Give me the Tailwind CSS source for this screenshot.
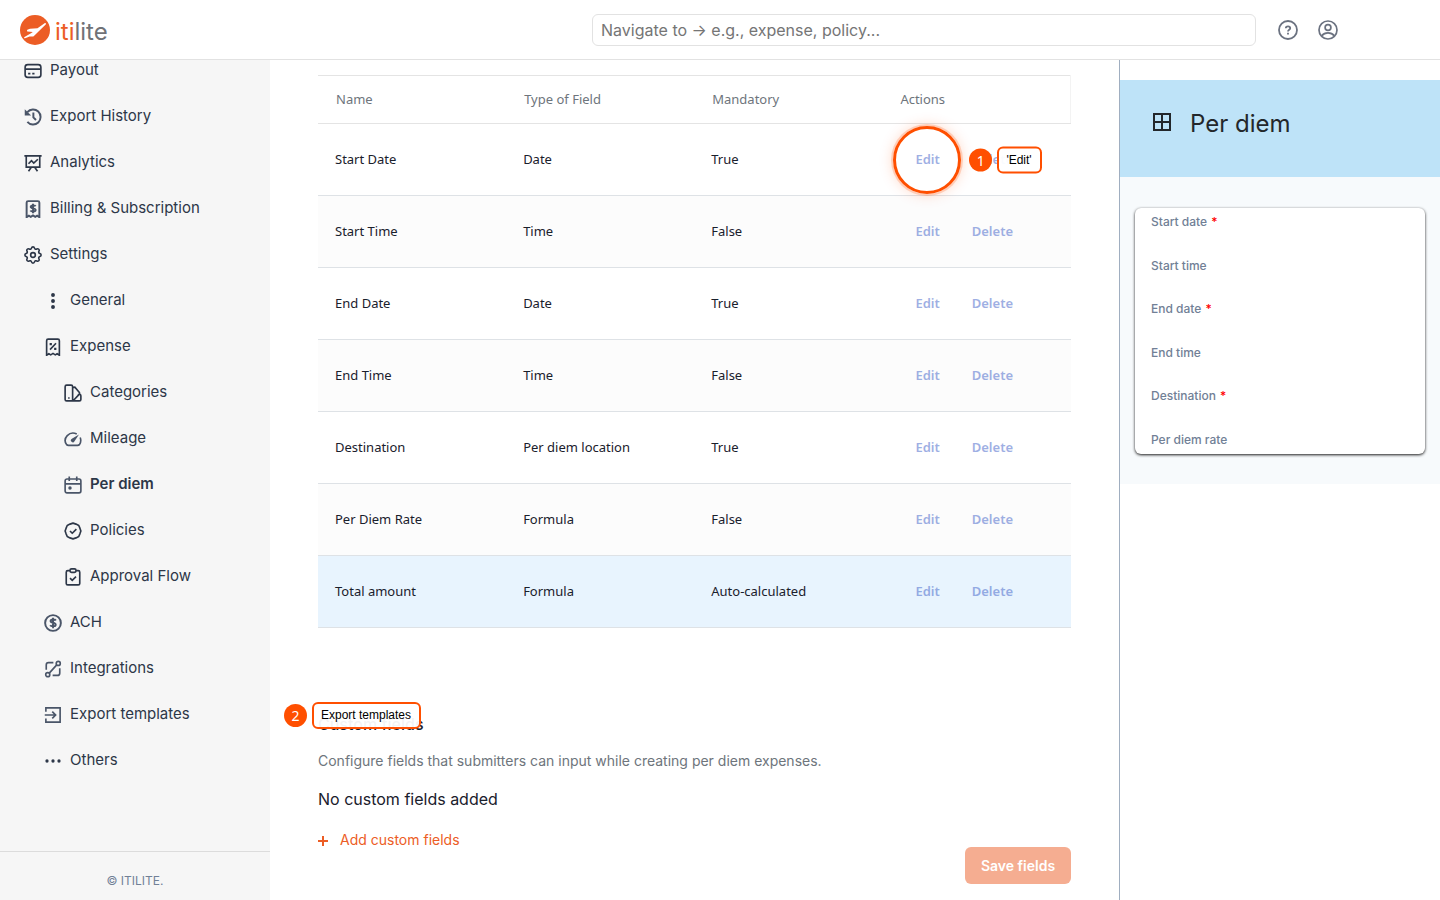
<!DOCTYPE html>
<html lang="en">
<head>
    <meta charset="UTF-8">
    <meta name="viewport" content="width=device-width, initial-scale=1.0">
    <title>ITILITE - Per diem</title>
    <script src="https://cdn.jsdelivr.net/npm/@tailwindcss/browser@4"></script>
</head>
<body class="bg-white text-[#1a202c] font-['Inter',sans-serif] h-screen flex flex-col overflow-hidden">
<header class="h-[60px] shrink-0 flex items-center border-b border-[#e2e2e2] pl-5 pr-[102px]">
    <a href="#" class="flex items-center gap-[5px] w-[572px] shrink-0">
        <svg class="size-[30px]" viewBox="0 0 30 30">
            <circle cx="15" cy="15" r="15" fill="#ec5d25"/>
            <path d="M24.600 8.200c1-.6 1.900.4 1.100 1.200L17.500 17.500l-3.800 3.700c-1.200.9-3.200-.2-4.700.5l-4 1.600c-1 .1-1.200-.8-.5-1.300l6.500-3.800 1.800-1.200-5.300-.4c-1-.6-.5-2 .5-2.200l2-.6 7.500-.6z" fill="#fff"/>
        </svg>
        <span class="text-2xl leading-[30px] pt-[5px] text-[#707277]"><span class="text-[#ec5d25]">iti</span>lite</span>
    </a>
    <input type="text" aria-label="Navigate" placeholder="Navigate to → e.g., expense, policy..." class="flex-1 h-8 border border-[#e2e2e2] rounded-md px-2 text-base placeholder:text-[#757575]">
    <button aria-label="Help" class="ml-[22px] text-[#6b7280]">
        <svg class="size-5" viewBox="0 0 20 20" fill="none" stroke="currentColor" stroke-width="1.800">
            <circle cx="10" cy="10" r="9"/>
            <path d="M7.800 8.300c0-1.300 1-2 2.200-2s2.200.8 2.200 1.900c0 1.500-2.200 1.500-2.200 3.200M10 12.700v1.700"/>
        </svg>
    </button>
    <button aria-label="Account" class="ml-5 text-[#6b7280]">
        <svg class="size-5" viewBox="0 0 20 20" fill="none" stroke="currentColor" stroke-width="1.700">
            <circle cx="10" cy="10" r="9"/>
            <circle cx="10" cy="7.500" r="2.900"/>
            <path d="M3.800 15.700c1.500-2 3.700-2.900 6.200-2.900s4.700.9 6.200 2.900"/>
        </svg>
    </button>
</header>
<div class="flex-1 min-h-0 flex">
    <aside class="w-[270px] shrink-0 bg-[#f6f6f6] flex flex-col text-[15px] text-[#2d3748]">
        <nav class="flex-1 min-h-0 overflow-hidden">
            <!-- list is scrolled a little under the header -->
            <ul class="-mt-[13px]">
                <li><a href="#" class="flex items-center gap-2 h-[46px] pl-6">
                    <svg class="size-[18px] mt-[2px]" viewBox="0 0 24 24" fill="none" stroke="currentColor" stroke-width="2.200"><rect x="1.500" y="3.500" width="21" height="17" rx="3.500"/><path d="M2 9.500h20M5.500 15.500h3M11 15.500h3"/></svg>
                    Payout</a></li>
                <li><a href="#" class="flex items-center gap-2 h-[46px] pl-6">
                    <svg class="size-[18px] mt-[2px] text-[#4a5568]" viewBox="0 0 24 24" fill="none" stroke="currentColor" stroke-width="2.600"><path d="M4.500 18.500A10 10 0 1 0 4.500 5.500"/><path d="M1 1.500v8.500h8.500z" fill="currentColor" stroke="none"/><path d="M12.500 6v6.500l3.500 3.500"/></svg>
                    Export History</a></li>
                <li><a href="#" class="flex items-center gap-2 h-[46px] pl-6">
                    <svg class="size-[18px] mt-[2px]" viewBox="0 0 24 24" fill="none" stroke="currentColor" stroke-width="2.200"><path d="M.5 2.500h23M3 2.500v15h18v-15M6 13l4-4 3 3 5.500-5M9.500 18L6 23M14.500 18l3.500 5"/></svg>
                    Analytics</a></li>
                <li><a href="#" class="flex items-center gap-2 h-[46px] pl-6">
                    <svg class="size-[18px] mt-[2px] text-[#4a5568]" viewBox="0 0 24 24" fill="none" stroke="currentColor" stroke-width="2.600"><path d="M3.500 23V3.500C3.500 2 4 1.500 5.500 1.500h13c1.500 0 2 .5 2 2V23l-3-2-2.500 1.500-3-2-3 2L6.500 21z"/><path d="M15.500 8.300c-1-1.500-6.500-1.800-6.500.8 0 3 6.500 1.200 6.500 4.200 0 2.700-5.700 2.400-7 .7M12 5v12.500"/></svg>
                    Billing &amp; Subscription</a></li>
                <li><a href="#" class="flex items-center gap-2 h-[46px] pl-6">
                    <svg class="size-[18px] mt-[2px]" viewBox="2 2 20 20" fill="none" stroke="currentColor" stroke-width="1.800"><path d="M10.325 4.317c.426-1.756 2.924-1.756 3.350 0a1.724 1.724 0 0 0 2.573 1.066c1.543-.94 3.310.826 2.370 2.370a1.724 1.724 0 0 0 1.065 2.572c1.756.426 1.756 2.924 0 3.350a1.724 1.724 0 0 0-1.066 2.573c.94 1.543-.826 3.310-2.370 2.370a1.724 1.724 0 0 0-2.572 1.065c-.426 1.756-2.924 1.756-3.350 0a1.724 1.724 0 0 0-2.573-1.066c-1.543.94-3.310-.826-2.370-2.370a1.724 1.724 0 0 0-1.065-2.572c-1.756-.426-1.756-2.924 0-3.350a1.724 1.724 0 0 0 1.066-2.573c-.94-1.543.826-3.310 2.370-2.370 1 .608 2.296.07 2.572-1.065z"/><circle cx="12" cy="12" r="2.600"/></svg>
                    Settings</a></li>
                <li><a href="#" class="flex items-center gap-2 h-[46px] pl-11">
                    <svg class="size-[18px] mt-[2px]" viewBox="0 0 24 24" fill="currentColor"><circle cx="12" cy="4" r="2.600"/><circle cx="12" cy="12" r="2.600"/><circle cx="12" cy="20" r="2.600"/></svg>
                    General</a></li>
                <li><a href="#" class="flex items-center gap-2 h-[46px] pl-11">
                    <svg class="size-[18px] mt-[2px]" viewBox="0 0 24 24" fill="none" stroke="currentColor" stroke-width="2.200"><path d="M3.500 23V3.500C3.500 2 4 1.500 5.500 1.500h13c1.500 0 2 .5 2 2V23l-3-2-2.500 1.500-3-2-3 2L6.500 21zM8 15.500l8-8.500"/><path d="M7.500 6.500h3v3h-3zM13.500 13h3v3h-3z" fill="currentColor" stroke="none"/></svg>
                    Expense</a></li>
                <li><a href="#" class="flex items-center gap-2 h-[46px] pl-16">
                    <svg class="size-[18px] mt-[2px]" viewBox="0 0 24 24" fill="none" stroke="currentColor" stroke-width="2.200"><path d="M3.500 1.500h6c1.200 0 2 .8 2 2v19h-8c-1.200 0-2-.8-2-2v-17c0-1.200.8-2 2-2zM12 4.500l2.500-.3 6 7c.7.900.5 1.500 0 2.300L12.500 22M18.500 14.500l2-.8c1.200 0 2 .6 2 1.800v5c0 1.200-.8 2-2 2h-9"/><path d="M5.500 17.500h2v2h-2z" fill="currentColor" stroke="none"/></svg>
                    Categories</a></li>
                <li><a href="#" class="flex items-center gap-2 h-[46px] pl-16">
                    <svg class="size-[18px] mt-[2px] text-[#4a5568]" viewBox="0 0 24 24" fill="none" stroke="currentColor" stroke-width="2.200"><path d="M17 5.300A10.500 9.800 0 0 0 3.500 19.500c.6.700 1.400 1 2.500 1h12c1.200 0 2-.3 2.600-1a10.500 10.500 0 0 0 1-9.500"/><path d="M20 6l-6 9a2.500 2.500 0 1 1-3.500-3.300z" fill="currentColor" stroke="none"/></svg>
                    Mileage</a></li>
                <li><a href="#" class="flex items-center gap-2 h-[46px] pl-16 font-semibold">
                    <svg class="size-[18px] mt-[2px] text-[#4a5568]" viewBox="0 0 24 24" fill="none" stroke="currentColor" stroke-width="2.200"><rect x="1.500" y="4" width="21" height="18.500" rx="2.500"/><path d="M1.500 10.500h21M7 .5v6M17 .5v6"/><circle cx="8" cy="16" r="2.300" fill="currentColor" stroke="none"/></svg>
                    Per diem</a></li>
                <li><a href="#" class="flex items-center gap-2 h-[46px] pl-16">
                    <svg class="size-[18px] mt-[2px]" viewBox="0 0 24 24" fill="none" stroke="currentColor" stroke-width="2.200" stroke-linejoin="round"><path d="M12 1.500l4 1.300 3.700 1.800 1.500 3.600L22.500 12l-1.300 3.800-1.500 3.600-3.700 1.800-4 1.300-4-1.300-3.700-1.800-1.500-3.600L1.500 12l1.300-3.800 1.500-3.600L8 2.800zM8 12l3 3 5.500-5.500"/></svg>
                    Policies</a></li>
                <li><a href="#" class="flex items-center gap-2 h-[46px] pl-16">
                    <svg class="size-[18px] mt-[2px]" viewBox="0 0 24 24" fill="none" stroke="currentColor" stroke-width="2.200"><path d="M8 3.500H5c-1.200 0-2 .8-2 2v15c0 1.200.8 2 2 2h14c1.200 0 2-.8 2-2v-15c0-1.200-.8-2-2-2h-3M8 13.500l3 3 5-5"/><rect x="8" y="1.200" width="8" height="4.600" rx="2"/></svg>
                    Approval Flow</a></li>
                <li><a href="#" class="flex items-center gap-2 h-[46px] pl-11">
                    <svg class="size-[18px] mt-[2px] text-[#4a5568]" viewBox="0 0 24 24" fill="none" stroke="currentColor" stroke-width="2.600"><circle cx="12" cy="12" r="10.500"/><path d="M15.800 8.600c-1-1.700-7-1.900-7 .7 0 3.200 6.800 1.700 6.800 5 0 2.900-6.200 2.500-7.400.7M12 5v14"/></svg>
                    ACH</a></li>
                <li><a href="#" class="flex items-center gap-2 h-[46px] pl-11">
                    <svg class="size-[18px] mt-[2px] text-[#4a5568]" viewBox="0 0 24 24" fill="none" stroke="currentColor" stroke-width="2.200"><circle cx="19" cy="4.500" r="2.700"/><circle cx="5" cy="19.500" r="2.700"/><path d="M17 6.500L7 17.500M3 13V6.500c0-2 1-3 3-3h6.500M21 11v6.500c0 2-1 3-3 3h-6.500"/></svg>
                    Integrations</a></li>
                <li><a href="#" class="flex items-center gap-2 h-[46px] pl-11">
                    <svg class="size-[18px] mt-[2px] text-[#4a5568]" viewBox="0 0 24 24" fill="none" stroke="currentColor" stroke-width="2.200"><path d="M2.500 7.500v-5h19v19h-19v-5M1 12h14M11 7.500l4.500 4.500-4.500 4.500"/></svg>
                    Export templates</a></li>
                <li><a href="#" class="flex items-center gap-2 h-[46px] pl-11">
                    <svg class="size-[18px] mt-[2px]" viewBox="0 0 24 24" fill="currentColor"><circle cx="4" cy="12" r="2.200"/><circle cx="12" cy="12" r="2.200"/><circle cx="20" cy="12" r="2.200"/></svg>
                    Others</a></li>
            </ul>
        </nav>
        <p class="h-[49px] border-t border-[#dcdcdc] pt-5 text-xs leading-[18px] text-center text-[#718096]">© ITILITE.</p>
    </aside>
    <main class="flex-1 min-w-0 px-12 pt-[15px]">
        <table class="w-full table-fixed text-left font-['Noto_Sans',sans-serif] text-[13px]">
            <thead>
                <tr class="h-12 border-y border-r border-[#e4e4e4] border-r-[#f3f3f3] text-[#6e757c]">
                    <th class="pl-[18px] font-normal">Name</th>
                    <th class="pl-[18px] font-normal">Type of Field</th>
                    <th class="pl-[18px] font-normal">Mandatory</th>
                    <th class="pl-[18px] font-normal">Actions</th>
                </tr>
            </thead>
            <tbody id="fields"></tbody>
        </table>
        <section class="relative mt-[84px]">
            <h2 class="text-base font-medium">Custom fields</h2>
            <div class="absolute -left-[34px] -top-[10px] flex items-center gap-[5px] font-['Liberation_Sans',sans-serif]">
                <span class="size-[23px] rounded-full bg-[#ff4f00] text-white text-sm leading-[23px] text-center font-['Noto_Sans',sans-serif]">2</span>
                <span class="h-[27px] border-2 border-[#ff4f00] rounded-md bg-white/95 pl-[7px] pr-2 text-xs leading-[22px] text-black">Export templates</span>
            </div>
            <p class="mt-[15px] text-sm text-[#6e757c]">Configure fields that submitters can input while creating per diem expenses.</p>
            <p class="mt-4 text-base">No custom fields added</p>
            <div class="mt-[19px] flex items-start justify-between">
                <button class="flex items-center gap-3 text-sm text-[#ec5d25]">
                    <svg class="size-[10px] mt-[2px]" viewBox="0 0 10 10" stroke="currentColor" stroke-width="2"><path d="M0 5h10M5 0v10"/></svg>
                    Add custom fields
                </button>
                <button class="mt-[17px] w-[106px] h-[37px] rounded-md bg-[#f5ad91] text-sm font-semibold text-white">Save fields</button>
            </div>
        </section>
    </main>
    <aside class="w-[321px] shrink-0 border-l border-[#a0aec0] pt-5">
        <div class="h-[97px] bg-[#bee3f8] pl-8 pb-[9px] flex items-center gap-[19px] text-[#23272b]">
            <svg class="size-[19px] mb-1" viewBox="0 0 19 19" fill="none" stroke="currentColor" stroke-width="2"><path d="M2 1h16v16H2zM10 1v16M2 9h16"/></svg>
            <h1 class="text-2xl">Per diem</h1>
        </div>
        <div class="bg-[#f7fafc] px-[14px] pt-[31px] pb-[30px]">
            <ul class="h-[246px] rounded-md bg-white px-4 py-[5px] flex flex-col justify-between text-xs leading-[18px] font-medium text-[#718096] shadow-[0_1px_3px_rgba(0,0,0,0.9)] mx-px">
                <li>Start date <span class="ml-px text-[#ff0000]">*</span></li>
                <li>Start time</li>
                <li>End date <span class="ml-px text-[#ff0000]">*</span></li>
                <li>End time</li>
                <li>Destination <span class="ml-px text-[#ff0000]">*</span></li>
                <li>Per diem rate</li>
            </ul>
        </div>
    </aside>
</div>
<script>
const fields = [
    ['Start Date', 'Date', 'True'],
    ['Start Time', 'Time', 'False'],
    ['End Date', 'Date', 'True'],
    ['End Time', 'Time', 'False'],
    ['Destination', 'Per diem location', 'True'],
    ['Per Diem Rate', 'Formula', 'False'],
    ['Total amount', 'Formula', 'Auto-calculated']
];

// step 1 of the walkthrough sits on the first row's Edit button
const callout = `
    <span class="absolute -left-[6px] top-1/2 -translate-y-1/2 size-[68px] rounded-full border-3 border-[#ff4f00] shadow-[0_0_0_2px_rgba(255,79,0,0.2),0_0_14px_rgba(255,79,0,0.25)]"></span>
    <span class="absolute left-[70px] top-1/2 -translate-y-1/2 flex items-center gap-[5px] font-normal font-['Liberation_Sans',sans-serif]">
        <span class="size-[23px] rounded-full bg-[#ff4f00] text-white text-sm leading-[23px] text-center font-['Noto_Sans',sans-serif]">1</span>
        <span class="h-[27px] border-2 border-[#ff4f00] rounded-md bg-white/95 pl-[7px] pr-2 text-xs leading-[22px] text-black">'Edit'</span>
    </span>`;

fields.forEach((f, i) => {
    const tr = document.createElement('tr');
    tr.className = 'h-[72px] border-b border-[#dee2e6] ';
    if (i === fields.length - 1) tr.className += 'bg-[#e8f4fe]';
    else if (i % 2) tr.className += 'bg-[#fcfcfc]';
    tr.innerHTML = `
        <td class="pl-[17px]">${f[0]}</td>
        <td class="pl-[17px]">${f[1]}</td>
        <td class="pl-[17px]">${f[2]}</td>
        <td class="pl-[17px]">
            <div class="relative flex font-semibold text-[#3f62c9]">
                <button class="px-4 opacity-50">Edit</button>
                <button class="px-4 opacity-50">Delete</button>
                ${i === 0 ? callout : ''}
            </div>
        </td>
    `;
    document.getElementById('fields').appendChild(tr);
});
</script>
</body>
</html>
